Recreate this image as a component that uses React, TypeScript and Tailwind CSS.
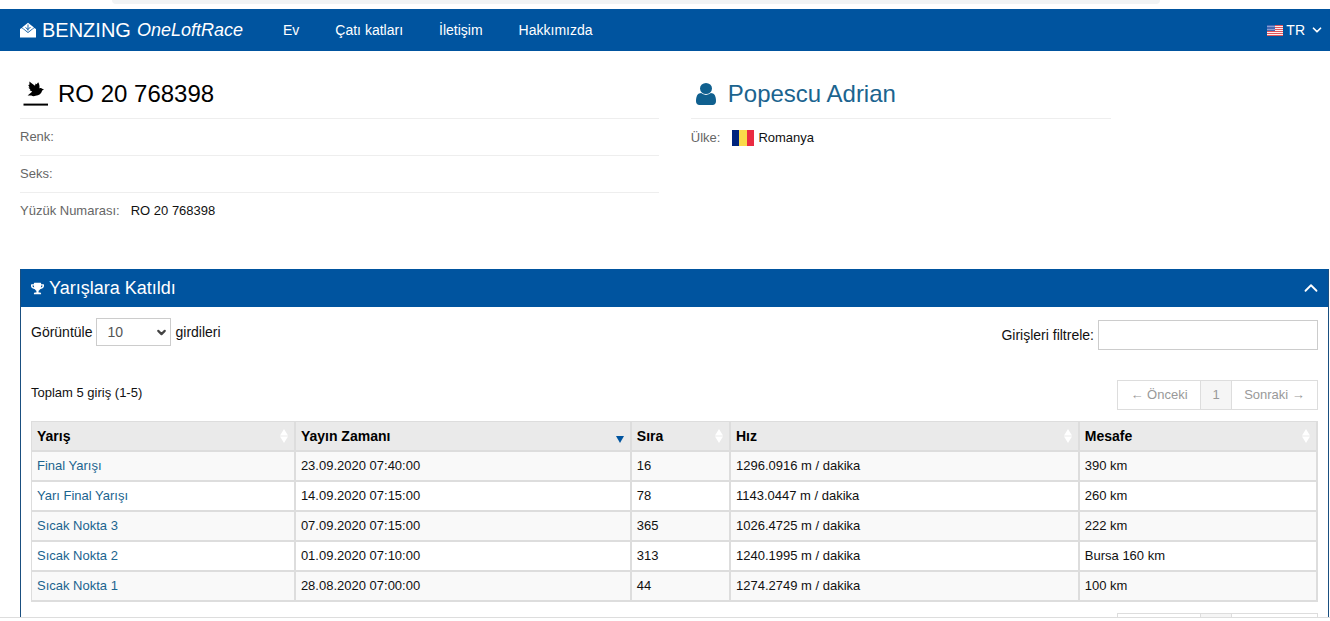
import { useState } from "react";
import { ChevronDown, ChevronUp } from "lucide-react";
import { FaTrophy } from "react-icons/fa";

const navLinks = ["Ev", "Çatı katları", "İletişim", "Hakkımızda"];

const columns = [
  { title: "Yarış", width: "w-[20.5%]", sorted: false },
  { title: "Yayın Zamanı", width: "w-[26.1%]", sorted: true },
  { title: "Sıra", width: "w-[7.7%]", sorted: false },
  { title: "Hız", width: "w-[27.1%]", sorted: false },
  { title: "Mesafe", width: "w-[18.5%]", sorted: false },
];

const races = [
  { name: "Final Yarışı", time: "23.09.2020 07:40:00", rank: 16, speed: "1296.0916", distance: "390 km" },
  { name: "Yarı Final Yarışı", time: "14.09.2020 07:15:00", rank: 78, speed: "1143.0447", distance: "260 km" },
  { name: "Sıcak Nokta 3", time: "07.09.2020 07:15:00", rank: 365, speed: "1026.4725", distance: "222 km" },
  { name: "Sıcak Nokta 2", time: "01.09.2020 07:10:00", rank: 313, speed: "1240.1995", distance: "Bursa 160 km" },
  { name: "Sıcak Nokta 1", time: "28.08.2020 07:00:00", rank: 44, speed: "1274.2749", distance: "100 km" },
];

function LoftIcon() {
  return (
    <svg viewBox="0 0 16 16" className="w-4 h-4 shrink-0" fill="white" aria-hidden="true">
      <path d="M0 7 L1.8 6 L8 11 L14.2 6 L16 7 V15.5 H0 Z" />
      <path d="M2 5.400 L8 0.800 L14 5.400 L8 10 Z" />
      <path d="M8 2.500 V8.500 M5.500 5.500 L8 7.500 L10.500 5" fill="none" stroke="#00549f" strokeWidth="0.9" />
    </svg>
  );
}

function PigeonIcon() {
  return (
    <svg viewBox="0 0 26 26" className="w-[26px] h-[26px] shrink-0" aria-hidden="true">
      <path d="M6.400 0.400 L8.600 2.200 L12 4.800 L12.600 2.400 L13.600 3.200 L15.200 1.200 C16.400 3.200 16.800 5 16.400 7.400 C17.200 6.800 18.600 6.900 19.200 7.800 L21 8.600 L19.200 9.500 C18.600 12.400 16 14.600 12.600 14.800 C10.800 15.400 9.400 15.200 8.400 14.400 L4.600 14.600 L8.200 11.600 L9.200 10.600 L6.600 9.200 L7.400 8.800 L5.400 6.600 L6.600 6.400 L5.200 3.900 L6.400 3.800 Z" />
      <path d="M0.500 22.600 H25 V24.600 H0.500 Z" />
    </svg>
  );
}

function UserIcon() {
  return (
    <svg viewBox="0 128 1280 1536" className="w-5 h-[22px] shrink-0" fill="#10608f" preserveAspectRatio="none" aria-hidden="true">
      <path d="M1280 1399q0 109-62.500 187t-150.500 78h-854q-88 0-150.500-78t-62.500-187q0-85 8.500-160.500t31.500-152 58.500-131 94-89 134.500-34.500q131 128 313 128t313-128q76 0 134.500 34.500t94 89 58.500 131 31.500 152 8.500 160.500zM1024 512q0 159-112.500 271.500t-271.500 112.500-271.500-112.500-112.500-271.500 112.500-271.500 271.500-112.500 271.500 112.500 112.500 271.500z" />
    </svg>
  );
}

function UsFlag() {
  return (
    <svg viewBox="0 0 16 11" className="w-4 h-[11px]" aria-hidden="true">
      <rect width="16" height="11" fill="#fdf0f0" />
      {[0, 2, 4, 6, 8, 10].map((y) => (
        <rect key={y} y={y} width="16" height="1" fill="#e0555b" />
      ))}
      <rect width="8" height="6" fill="#4668b4" />
      {[1, 3, 5, 7].map((x) => (
        <path key={x} d={`M${x - 0.5} 1h1v1h-1z M${x - 0.5} 4h1v1h-1z`} fill="#c9d4ee" />
      ))}
    </svg>
  );
}

function RomaniaFlag() {
  return (
    <svg viewBox="0 0 22 16" className="w-[22px] h-4" aria-hidden="true">
      <rect width="8" height="16" fill="#00247d" />
      <rect x="7" width="8" height="16" fill="#fada4a" />
      <rect x="15" width="7" height="16" fill="#ea2b42" />
    </svg>
  );
}

function SortMark({ sorted }: { sorted: boolean }) {
  return (
    <svg viewBox="0 0 8 14" className="w-2 h-3.5" aria-hidden="true">
      {sorted ? (
        <path d="M0 7 H8 L4 14 Z" fill="#00549f" />
      ) : (
        <path d="M0 6.500 L4 0 L8 6.500 Z M0 7.500 H8 L4 14 Z" fill="white" />
      )}
    </svg>
  );
}

function Pagination() {
  return (
    <div className="flex h-[30px] border border-[#ddd] text-[13px] text-[#999]">
      <button className="w-[82px]" disabled>
        ← Önceki
      </button>
      <button className="w-[32px] border-x border-[#ddd] bg-[#f5f5f5]">1</button>
      <button className="w-[85px]" disabled>
        Sonraki →
      </button>
    </div>
  );
}

function App() {
  const [open, setOpen] = useState(true);
  const [pageSize, setPageSize] = useState("10");
  const [filter, setFilter] = useState("");

  const visibleRaces = races.filter((race) =>
    race.name.toLowerCase().includes(filter.toLowerCase())
  );

  return (
    <div className="h-dvh flex flex-col bg-white text-[#111] text-[13px] font-['Liberation_Sans',Arial,sans-serif]">
      {/* Browser edge */}
      <div className="h-[9px] shrink-0 pl-[112px] pr-[170px]">
        <div className="h-1 rounded-b-lg bg-[#f1f3f4]" />
      </div>

      <header className="h-[42px] shrink-0 flex items-center bg-[#00549f] text-white pl-5 pr-1.5">
        <a href="#" className="flex items-center">
          <LoftIcon />
          <span className="ml-1.5 text-xl">BENZING</span>
          <span className="ml-1.5 text-lg italic">OneLoftRace</span>
        </a>
        <nav className="flex gap-9 ml-10 text-sm">
          {navLinks.map((link) => (
            <a href="#" key={link}>
              {link}
            </a>
          ))}
        </nav>
        <button className="ml-auto flex items-center gap-[3px] text-sm">
          <UsFlag />
          TR
          <ChevronDown size={14} strokeWidth={3} className="ml-0.5" />
        </button>
      </header>

      <main className="flex-1 min-h-0 overflow-hidden pl-5 pr-px">
        <div className="flex gap-8 h-[218px]">
          {/* Pigeon */}
          <section className="w-[48.8%]">
            <h1 className="h-[68px] pt-[18px] pl-[3px] flex items-center gap-[9px] border-b border-[#eee] text-2xl text-black">
              <PigeonIcon />
              RO 20 768398
            </h1>
            <dl>
              <div className="h-[37px] flex items-center border-b border-[#eee]">
                <dt className="text-[#666]">Renk:</dt>
              </div>
              <div className="h-[37px] flex items-center border-b border-[#eee]">
                <dt className="text-[#666]">Seks:</dt>
              </div>
              <div className="h-9 flex items-center gap-[11px]">
                <dt className="text-[#666]">Yüzük Numarası:</dt>
                <dd>RO 20 768398</dd>
              </div>
            </dl>
          </section>

          {/* Owner */}
          <section className="w-[32.1%]">
            <h2 className="h-[68px] pt-[18px] pl-[5px] flex items-center gap-3 border-b border-[#eee] text-2xl text-[#1b648f]">
              <UserIcon />
              <a href="#">Popescu Adrian</a>
            </h2>
            <dl className="h-[37px] flex items-center">
              <dt className="text-[#666]">Ülke:</dt>
              <dd className="ml-3 flex items-center gap-1">
                <RomaniaFlag />
                Romanya
              </dd>
            </dl>
          </section>
        </div>

        <section className="border-x border-[#1a4f80]">
          <button
            className="w-full h-[38px] flex items-center bg-[#00549f] text-white text-lg px-2.5"
            onClick={() => setOpen(!open)}
          >
            <FaTrophy size={13} className="mr-[5px]" />
            Yarışlara Katıldı
            <ChevronUp size={22} strokeWidth={2} className="ml-auto -mr-1" />
          </button>

          {open && (
            <div className="px-2.5 pt-[11px]">
              <div className="flex justify-between items-start text-sm">
                <div className="flex items-center gap-1">
                  <label htmlFor="page-size">Görüntüle</label>
                  <div className="relative">
                    <select
                      id="page-size"
                      className="appearance-none block w-[75px] h-7 pl-2.5 border border-[#ccc] bg-white text-sm text-[#555]"
                      value={pageSize}
                      onChange={(e) => setPageSize(e.target.value)}
                    >
                      <option>10</option>
                      <option>25</option>
                      <option>50</option>
                    </select>
                    <ChevronDown
                      size={13}
                      strokeWidth={4}
                      className="absolute right-[3px] top-2 text-[#444] pointer-events-none"
                    />
                  </div>
                  <label htmlFor="page-size">girdileri</label>
                </div>
                <div className="flex items-center gap-1 pt-0.5">
                  <label htmlFor="filter">Girişleri filtrele:</label>
                  <input
                    id="filter"
                    type="text"
                    className="w-[220px] h-[30px] px-2 border border-[#ccc]"
                    value={filter}
                    onChange={(e) => setFilter(e.target.value)}
                  />
                </div>
              </div>

              <div className="flex justify-between items-start mt-[30px]">
                <p className="pt-[3px]">Toplam 5 giriş (1-5)</p>
                <Pagination />
              </div>

              <table className="w-full mt-[11px] table-fixed border-separate border-spacing-0 border-t border-l border-[#ddd]">
                <thead>
                  <tr className="h-[30px] bg-[#eaeaea] text-black">
                    {columns.map((col) => (
                      <th
                        key={col.title}
                        className={`${col.width} p-0 pl-[5px] pr-1.5 text-left text-sm border-r-2 border-b-2 border-[#ddd]`}
                      >
                        <div className="flex items-center justify-between">
                          {col.title}
                          <SortMark sorted={col.sorted} />
                        </div>
                      </th>
                    ))}
                  </tr>
                </thead>
                <tbody>
                  {visibleRaces.map((race) => (
                    <tr
                      key={race.name}
                      className="h-[30px] odd:bg-[#f9f9f9] *:p-0 *:pl-[5px] *:border-r-2 *:border-b-2 *:border-[#ddd]"
                    >
                      <td>
                        <a href="#" className="text-[#1b648f]">
                          {race.name}
                        </a>
                      </td>
                      <td>{race.time}</td>
                      <td>{race.rank}</td>
                      <td>{race.speed} m / dakika</td>
                      <td>{race.distance}</td>
                    </tr>
                  ))}
                </tbody>
              </table>

              <div className="flex justify-end mt-[11px]">
                <Pagination />
              </div>
            </div>
          )}
        </section>
      </main>

      <footer className="h-1 shrink-0 border-t border-[#ddd]" />
    </div>
  );
}

export default App;
